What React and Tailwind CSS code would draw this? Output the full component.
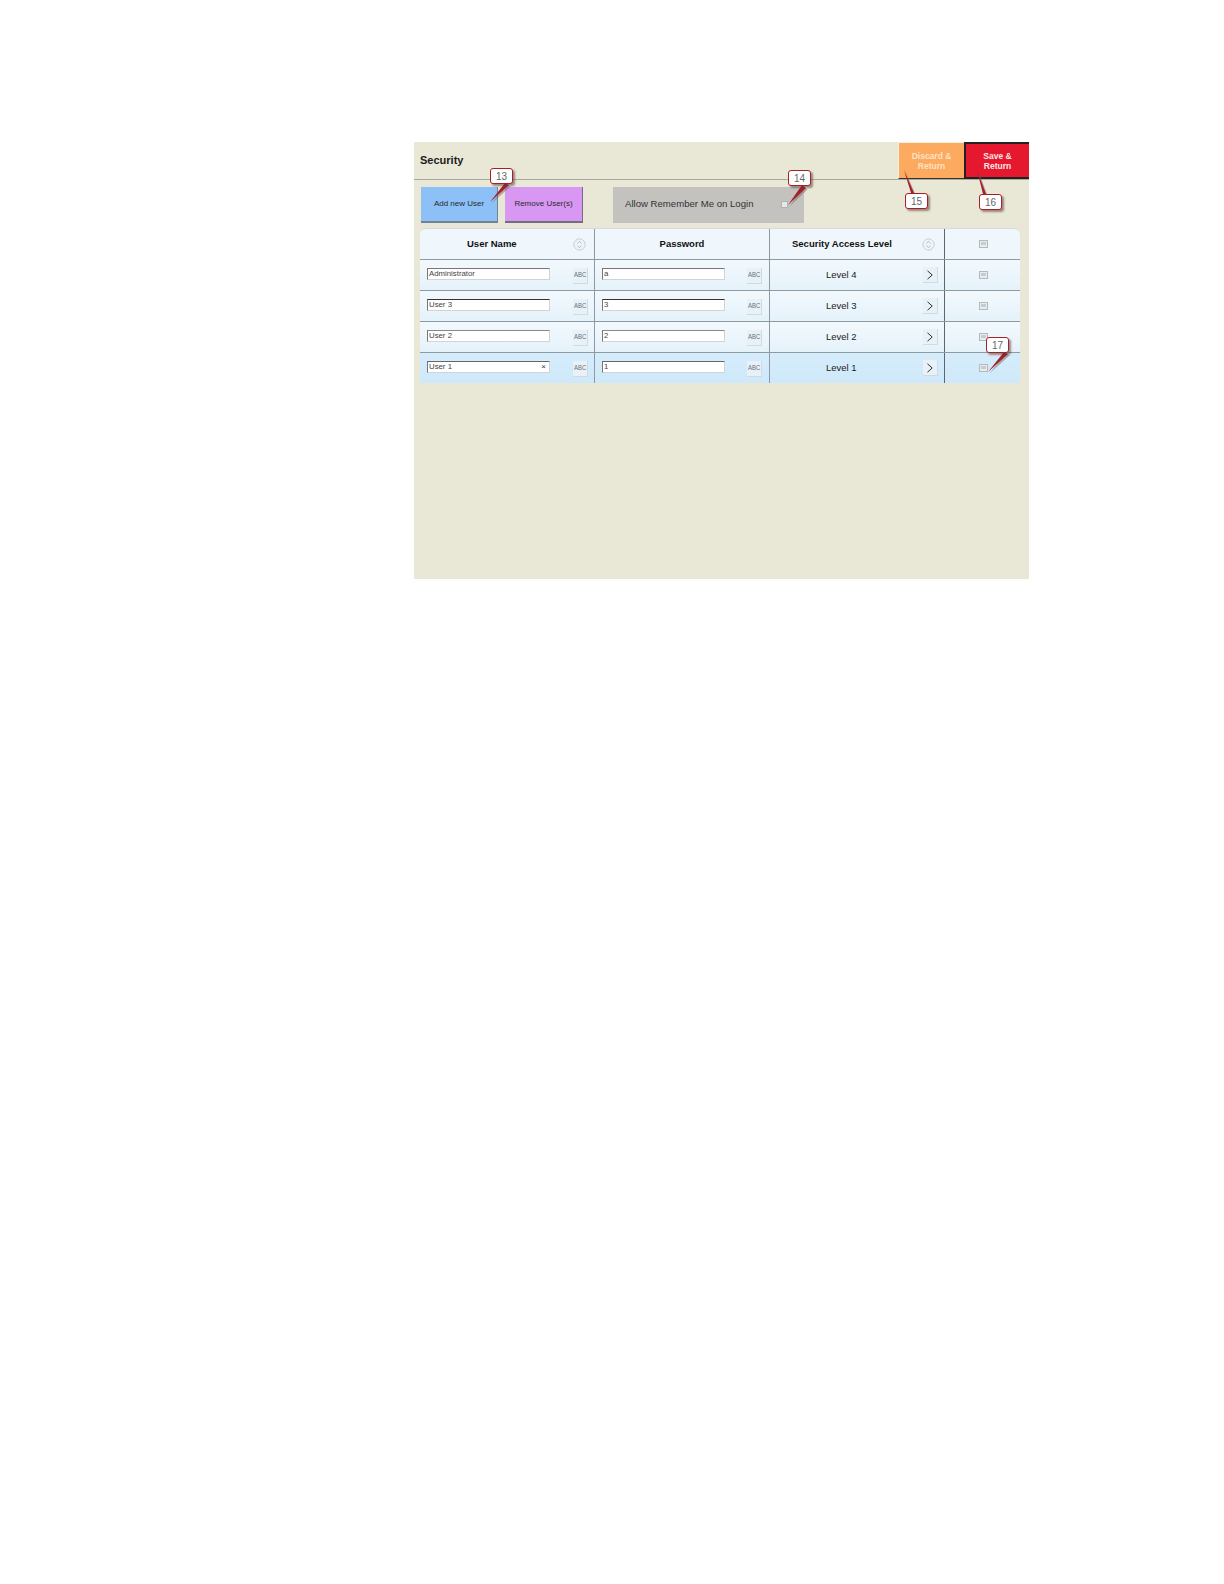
import React from 'react';

const font = { fontFamily: '"Liberation Sans", Arial, sans-serif' };

const rows = [
    { name: 'Administrator', password: 'a', level: 'Level 4', height: 'h-[31px]', border: 'border-t-[#777]' },
    { name: 'User 3', password: '3', level: 'Level 3', height: 'h-[31px]', border: 'border-t-[#333]' },
    { name: 'User 2', password: '2', level: 'Level 2', height: 'h-[31px]', border: 'border-t-[#888]' },
    { name: 'User 1', password: '1', level: 'Level 1', height: 'h-[30px]', border: 'border-t-[#666]', active: true },
];

// tapered leader lines from each callout down to its target
const leaders = [
    '91,41 95,43 76,60',
    '388,43 392,46 374,63',
    '497,51 500,51 490,28',
    '569,52 572,52 563,28',
    '590,210 594,212 574,230',
];

const SortIcon = () => (
    <svg width="13" height="13" viewBox="0 0 14 14" className="shrink-0">
        <circle cx="7" cy="7" r="6" fill="#eef5fa" stroke="#b5bfc6" strokeWidth="1" strokeDasharray="2 0.6" />
        <path d="M4.8 5.8 7 3.6l2.2 2.2M4.8 8.2 7 10.4l2.2-2.2" fill="none" stroke="#a9b3ba" strokeWidth="0.9" />
    </svg>
);

const CheckBox = () => (
    <div className="w-[9px] h-[8px] border border-[#b4b9bc] bg-[#e9ecee] p-[1px]">
        <div className="h-[3px] bg-[#c8ccce]" />
    </div>
);

const AbcButton = () => (
    <div className="w-[15px] h-[16px] mt-[1px] flex items-center justify-center bg-[#e8f1f7] border-b border-r border-[#d2dade] text-[8px] text-[#66717a]">
        <span className="inline-block scale-x-75">ABC</span>
    </div>
);

const TextInput = ({ value, border, clear }) => (
    <div className={`relative h-[12px] mb-[2px] bg-white border border-[#d0d4d7] border-l-[#777] border-t-[1.5px] ${border} pl-[1px] text-[7.8px] leading-[9px] text-[#444]`}>
        {value}
        {clear && <span className="absolute right-[3px] top-0 text-[8px] leading-[9px] text-[#333]">×</span>}
    </div>
);

const Callout = ({ n, className }) => (
    <div className={`absolute w-[23px] h-[16px] bg-white border-[1.5px] border-[#a3202c] rounded-[3px] shadow-[2px_2px_2px_rgba(90,60,50,0.55)] flex items-center justify-center text-[10px] text-[#666] ${className}`}>
        {n}
    </div>
);

export default function App() {
    return (
        <div className="w-[1224px] h-[1584px] bg-white pt-[142px] pl-[414px]" style={font}>
            <div className="relative w-[615px] h-[437px] bg-[#e9e7d6]">
                {/* Header */}
                <div className="h-[38px] border-b border-[#a9a99c] flex justify-between">
                    <div className="pl-[6px] pt-[12px] text-[11px] leading-[13px] font-bold text-[#1c1c1c]">Security</div>
                    <div className="flex h-[37px]">
                        <div className="w-[66px] bg-[#fbaa5f] border-l border-t border-l-[#f7f0e0] border-t-[#f7f0e0] border-b border-b-[#333] flex items-center justify-center text-center text-[8.5px] leading-[10px] font-bold text-[#fde3c4]">
                            Discard &<br />Return
                        </div>
                        <div className="w-[65px] bg-[#e5182f] border-2 border-r-0 border-[#222] flex items-center justify-center text-center text-[8.5px] leading-[10px] font-bold text-[#ffe6e6]">
                            Save &<br />Return
                        </div>
                    </div>
                </div>

                {/* Toolbar */}
                <div className="flex items-start pl-[7px] pt-[7px]">
                    <div className="w-[77px] h-[36px] pb-[1px] bg-[#8cc0f6] border-r border-b-2 border-[#6f8497] flex items-center justify-center text-[8px] text-[#2a2a2a]">
                        Add new User
                    </div>
                    <div className="w-[78px] h-[36px] pb-[1px] ml-[7px] bg-[#d797f3] border-r border-b-2 border-[#6f6f80] flex items-center justify-center text-[8px] text-[#2a2a2a]">
                        Remove User(s)
                    </div>
                    <div className="w-[191px] h-[36px] pb-[1px] ml-[30px] bg-[#c3c2bf] flex items-center justify-between pl-[12px] pr-[16px] text-[9.6px] text-[#333]">
                        Allow Remember Me on Login
                        <div className="w-[7px] h-[7px] bg-[#e6e8e8] border border-[#b0b3b4]" />
                    </div>
                </div>

                {/* User table */}
                <div className="w-[600px] ml-[6px] mt-[5px] rounded-t-[6px] overflow-hidden bg-[#eff7fc] border-t border-[#d5dadb]">
                    <div className="flex h-[31px] border-b border-[#8e9aa3] text-[9.5px] font-bold text-[#111]">
                        <div className="w-[175px] border-r border-[#8e9aa3] flex items-center pl-[47px] pr-[8px] justify-between">
                            User Name
                            <SortIcon />
                        </div>
                        <div className="w-[175px] border-r border-[#8e9aa3] flex items-center justify-center">Password</div>
                        <div className="w-[175px] border-r border-[#5c6770] flex items-center pl-[22px] pr-[9px] justify-between">
                            Security Access Level
                            <SortIcon />
                        </div>
                        <div className="flex-1 flex items-center justify-center pl-[2px]">
                            <CheckBox />
                        </div>
                    </div>
                    {rows.map((row, i) => (
                        <div
                            key={row.name}
                            className={`flex ${row.height} ${i < 3 ? 'border-b border-[#8e9aa3]' : ''} ${row.active ? 'bg-gradient-to-b from-[#d5ecfb] to-[#cfe9fa]' : 'bg-gradient-to-b from-[#f2f9fd] to-[#e5f2fa]'}`}
                        >
                            <div className="w-[175px] border-r border-[#8e9aa3] flex items-center pl-[7px] pr-[6px] gap-[23px]">
                                <div className="flex-1">
                                    <TextInput value={row.name} border={row.border} clear={row.active} />
                                </div>
                                <AbcButton />
                            </div>
                            <div className="w-[175px] border-r border-[#8e9aa3] flex items-center pl-[7px] pr-[7px] gap-[22px]">
                                <div className="flex-1">
                                    <TextInput value={row.password} border={row.border} />
                                </div>
                                <AbcButton />
                            </div>
                            <div className="w-[175px] border-r border-[#5c6770] flex items-center pl-[56px] pr-[6px] justify-between text-[9.5px] text-[#222]">
                                {row.level}
                                <div className="w-[15px] h-[16px] flex items-center justify-center bg-[#e8f1f7] border-b border-r border-[#d2dade]">
                                    <svg width="8" height="10" viewBox="0 0 8 10">
                                        <path d="M1.5 0.8 6.2 5 1.5 9.2" fill="none" stroke="#333" strokeWidth="1" />
                                    </svg>
                                </div>
                            </div>
                            <div className="flex-1 flex items-center justify-center pl-[2px]">
                                <CheckBox />
                            </div>
                        </div>
                    ))}
                </div>

                {/* Annotation leader lines */}
                <svg className="absolute left-0 top-0 pointer-events-none" width="615" height="437">
                    {leaders.map((points) => (
                        <g key={points}>
                            <polygon points={points} fill="#7a6a60" opacity="0.5" transform="translate(1.5 1.5)" />
                            <polygon points={points} fill="#a3202c" />
                        </g>
                    ))}
                </svg>

                <Callout n="13" className="left-[76px] top-[26px]" />
                <Callout n="14" className="left-[374px] top-[28px]" />
                <Callout n="15" className="left-[491px] top-[51px]" />
                <Callout n="16" className="left-[565px] top-[52px]" />
                <Callout n="17" className="left-[572px] top-[195px]" />
            </div>
        </div>
    );
}
